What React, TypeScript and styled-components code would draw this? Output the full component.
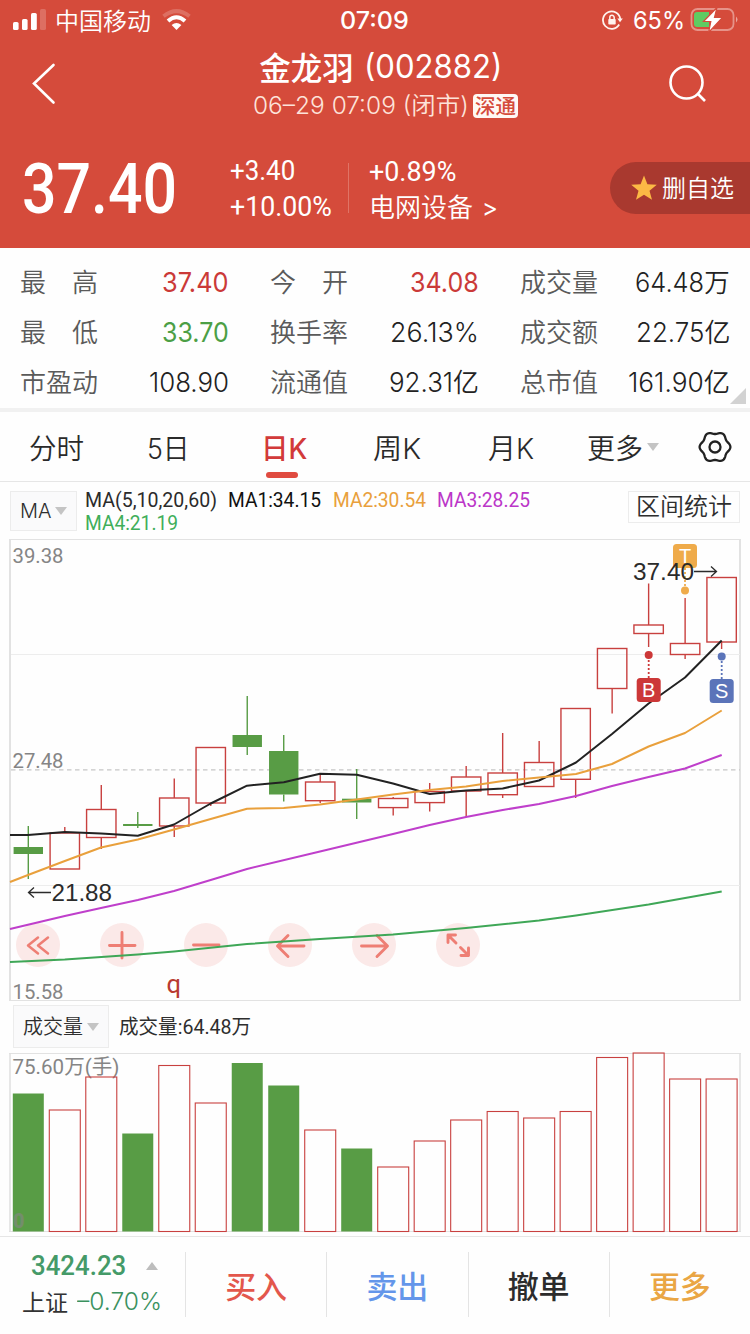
import React, { useLayoutEffect, useRef, useState } from "react";
import styled, { createGlobalStyle, css } from "styled-components";

const RED = "#d54b3b";
const CJK = `"Noto Sans CJK SC", sans-serif`;
const UI = `Inter, ${CJK}`;
const DIN = `Roboto, ${CJK}`;
const UP = "#c8403f";
const DOWN = "#589c45";

const Global = createGlobalStyle`
  * { box-sizing: border-box; }
  body { margin: 0; background: #fefefe; font-family: ${UI}; color: #2e2e2e; }
  button { font: inherit; color: inherit; border: 0; background: none; padding: 0; }
`;

/* Text condensed or widened to a fixed measure. */
const FitBox = styled.span<{ $w: number; $din?: boolean }>`
  display: inline-block;
  flex: none;
  width: ${(p) => p.$w}px;
  text-align: left;
  font-family: ${(p) => (p.$din ? DIN : "inherit")};
`;
const FitInner = styled.span`
  display: inline-block;
  white-space: pre;
  transform-origin: 0 50%;
`;
function Fit({ w, din, children }: { w: number; din?: boolean; children: string }) {
  const ref = useRef<HTMLSpanElement>(null);
  const [scale, setScale] = useState(1);
  useLayoutEffect(() => {
    if (ref.current) setScale(w / ref.current.offsetWidth);
  }, [w, children]);
  return (
    <FitBox $w={w} $din={din}>
      <FitInner ref={ref} style={{ transform: `scaleX(${scale})` }}>
        {children}
      </FitInner>
    </FitBox>
  );
}

const Page = styled.div`
  width: 750px;
  height: 1334px;
  overflow: hidden;
  background: #fefefe;
  display: flex;
  flex-direction: column;
`;

/* ---------- header ---------- */
const Header = styled.header`
  height: 248px;
  background: ${RED};
  color: #fff;
  flex: none;
`;
const StatusBar = styled.div`
  height: 40px;
  display: grid;
  grid-template-columns: 1fr auto 1fr;
  align-items: center;
  padding: 0 12px 0 13px;
  font-size: 24px;
  font-weight: 400;
`;
const StatusSide = styled.div<{ $end?: boolean }>`
  display: flex;
  align-items: center;
  justify-content: ${(p) => (p.$end ? "flex-end" : "flex-start")};
`;
const Carrier = styled.span`
  font: 350 24px/32px ${CJK};
  margin: 0 11px 0 9px;
`;
const Clock = styled.span`
  font-weight: 500;
  font-size: 24px;
  padding-right: 2px;
`;
const Battery = styled.span`
  margin: 0 5px 0 10px;
`;
const TitleRow = styled.div`
  height: 88px;
  display: grid;
  grid-template-columns: 85px 1fr 124px;
`;
const NavButton = styled.button`
  display: flex;
  align-items: center;
  justify-content: center;
`;
const TitleBlock = styled.div`
  display: flex;
  flex-direction: column;
  align-items: center;
  padding-left: 50px;
`;
const Title = styled.h1`
  margin: 5px 0 0;
  display: flex;
  align-items: center;
  gap: 10px;
  font-size: 32px;
  line-height: 44px;
  font-weight: 400;
`;
const TitleName = styled.span`
  font: 500 31.500px/44px ${CJK};
  margin-top: -3px;
`;
const Session = styled.div`
  display: flex;
  align-items: center;
  gap: 4px;
  font-size: 24px;
  font-weight: 350;
  line-height: 34px;
  color: #fde3da;
  padding-left: 10px;
`;
const Badge = styled.span`
  width: 45px;
  height: 24px;
  border-radius: 4px;
  background: #fff8f4;
  color: ${RED};
  font: 500 20.500px/22px ${CJK};
  text-align: center;
`;
const QuoteRow = styled.div`
  height: 120px;
  display: flex;
  align-items: center;
  padding-left: 22px;
`;
const Price = styled.div`
  font-size: 71px;
  line-height: 80px;
  font-weight: 500;
  margin-right: 53px;
`;
const Change = styled.div<{ $w: number; $top: number }>`
  width: ${(p) => p.$w}px;
  font-size: 27.500px;
  line-height: 36px;
  display: flex;
  flex-direction: column;
  padding-top: ${(p) => p.$top}px;
`;
const Rule = styled.div`
  width: 1px;
  height: 50px;
  background: #e07466;
  margin-right: 20px;
`;
const Sector = styled.span`
  display: flex;
  gap: 9px;
  margin-top: -2px;
  font: 350 26px/36px ${CJK};
`;
const Arrow = styled.span`
  font: 400 24px/40px Inter, sans-serif;
`;
const Watch = styled.button`
  margin-left: auto;
  width: 140px;
  height: 52px;
  border-radius: 26px 0 0 26px;
  background: #a9392f;
  display: flex;
  align-items: center;
  gap: 4px;
  padding-left: 20px;
  font: 350 24px/48px ${CJK};
`;
const WatchLabel = styled.span`
  margin-top: -3px;
`;

/* ---------- statistics ---------- */
const Stats = styled.section`
  height: 164px;
  border-bottom: 4px solid #f1f1f1;
  padding: 9px 20px 0 20px;
  display: grid;
  grid-template-columns: 209px 209px 210px;
  column-gap: 41px;
  grid-auto-rows: 50px;
  position: relative;
  flex: none;
`;
const Stat = styled.div`
  display: flex;
  align-items: center;
  justify-content: space-between;
`;
const StatLabel = styled.span`
  font: 350 26px/38px ${CJK};
  color: #5a5a5a;
  margin-top: -2px;
`;
const StatValue = styled.span<{ $color?: string }>`
  font-size: 26.500px;
  font-weight: ${(p) => (p.$color ? 400 : 350)};
  line-height: 38px;
  color: ${(p) => p.$color ?? "#222"};
`;
const Corner = styled.i`
  position: absolute;
  right: 4px;
  bottom: 4px;
  border: 8px solid;
  border-color: transparent #d2d2d2 #d2d2d2 transparent;
`;

/* ---------- period tabs ---------- */
const Tabs = styled.nav`
  height: 70px;
  border-bottom: 1px solid #e6e6e6;
  display: flex;
  padding-left: 29px;
  position: relative;
  flex: none;
`;
const Tab = styled.button<{ $gap: number; $active?: boolean }>`
  height: 69px;
  margin-right: ${(p) => p.$gap}px;
  font-size: 28px;
  font-weight: ${(p) => (p.$active ? 500 : 350)};
  color: ${(p) => (p.$active ? "#d23a3a" : "#2a2a2a")};
  display: flex;
  align-items: center;
  gap: 4px;
  position: relative;
  &::after {
    content: "";
    display: ${(p) => (p.$active ? "block" : "none")};
    position: absolute;
    left: 5px;
    bottom: 3px;
    width: 32px;
    height: 6px;
    border-radius: 3px;
    background: #e04b40;
  }
`;
const Caret = styled.i<{ $up?: boolean }>`
  border: 6.5px solid transparent;
  ${(p) =>
    p.$up
      ? css`border-bottom: 8px solid #bdbdbd; border-top: 0;`
      : css`border-top: 8px solid #c4c4c4; border-bottom: 0;`}
`;

/* ---------- indicator bars ---------- */
const MaBar = styled.div`
  height: 58px;
  display: flex;
  padding: 9px 10px 0 10px;
  flex: none;
`;
const Select = styled.button<{ $w: number; $h: number }>`
  width: ${(p) => p.$w}px;
  height: ${(p) => p.$h}px;
  border: 1px solid #ececec;
  background: #fafafb;
  display: flex;
  align-items: center;
  justify-content: center;
  gap: 4px;
  font-size: 20px;
  font-weight: 350;
`;
const MaLegend = styled.div`
  width: 520px;
  margin-left: 8px;
  margin-top: -2px;
  display: flex;
  flex-wrap: wrap;
  align-content: flex-start;
  font-size: 20px;
  line-height: 23px;
`;
const MaItem = styled.span<{ $color: string; $gap: number }>`
  color: ${(p) => p.$color};
  margin-right: ${(p) => p.$gap}px;
`;
const RangeButton = styled.button`
  width: 112px;
  height: 32px;
  margin-left: auto;
  border: 1px solid #ececec;
  padding-bottom: 4px;
  font: 350 24px/26px ${CJK};
`;
const VolumeBar = styled.div`
  height: 51px;
  display: flex;
  align-items: center;
  padding-left: 13px;
  gap: 10px;
  font: 400 20px/30px ${DIN};
  flex: none;
`;

/* ---------- charts ---------- */
const ChartArea = styled.div`
  position: relative;
  height: 461px;
  flex: none;
`;
const Plot = styled.svg`
  display: block;
  position: relative;
  overflow: visible;
  pointer-events: none;
  flex: none;
`;
const Controls = styled.div`
  position: absolute;
  left: 16px;
  top: 383px;
  display: flex;
  gap: 40px;
`;
const Control = styled.button`
  width: 44px;
  height: 44px;
  border-radius: 50%;
  background: #fbe9e8;
`;

type Candle = [number, number, number, number, boolean?];
/* high, body top, body bottom, low, falling */
const candles: Candle[] = [
  [826, 847, 854, 879, true],
  [827, 833, 869, 869],
  [785, 809.5, 837.5, 849],
  [812, 824, 826, 828, true],
  [778.5, 798, 826, 837],
  [747.5, 747.5, 803, 806],
  [696, 735, 747, 755, true],
  [735, 751, 794.5, 801.5, true],
  [775, 782, 800.7, 803],
  [769, 798.7, 802.5, 819, true],
  [797, 798.5, 807.6, 815.5],
  [783, 791.5, 802.6, 811.5],
  [766, 777, 791, 817],
  [733, 773, 794.7, 798],
  [741, 762.5, 786.5, 787],
  [708.5, 708.5, 779.3, 798],
  [648.5, 648.5, 688.5, 713.5],
  [583.5, 625, 633.5, 647],
  [598, 643.5, 654.5, 659],
  [577.5, 577.5, 642, 649],
];
const volumes = [
  1093.5, 1110, 1077, 1133.5, 1065.5, 1103, 1063, 1085.5, 1130, 1148.5, 1167, 1141, 1120, 1111.5, 1118, 1111.5,
  1057.5, 1053, 1079, 1079,
];
const STEP = 36.49;
const cx = (i: number) => 28.3 + i * STEP;

const ma = [
  {
    color: "#222",
    pts: "10,835 28,835 64.8,832 101,833.5 137.8,835.8 174,824.5 210.7,803.5 247,785.7 283.8,782.3 320,773.7 356.8,774.7 393,783.5 429.7,794 466,790.5 502.7,788.5 539,780.5 576,762.5 612,734 648.6,703.5 685,677.5 721.7,640.5",
  },
  {
    color: "#e9a03c",
    pts: "10,882 28,875 64.8,861 101,847.5 137.8,839.5 174,829.5 210.7,819 247,808.7 283.8,808 320,804.5 356.8,799.5 393,794.5 429.7,790 466,786.5 502.7,781 539,777.5 576,774 612,764 648.6,746.5 685,733 721.7,710.5",
  },
  {
    color: "#bf3fcb",
    pts: "10,929 64.8,916 101,908 137.8,900 174,891 210.7,880 247,869 320,851.5 393,834 429.7,825 466,817 502.7,810 539,804 576,796 612,786 648.6,777 685,768.5 721.7,755",
  },
  {
    color: "#3fa757",
    pts: "10,962 64.8,959.5 137.8,954.5 174,951.5 247,944 320,939 393,934.5 466,928 539,920.5 576,915.5 648.6,904.5 721.7,891.5",
  },
];

const marks = [
  { x: 648.7, y: 690, dot: 655, letter: "B", color: "#cc3838" },
  { x: 685, y: 556, dot: 590.5, letter: "T", color: "#efab4a" },
  { x: 721.7, y: 691, dot: 656.5, letter: "S", color: "#5b74b9" },
];

function Icon({ d, w }: { d: string; w: number }) {
  return (
    <svg width="44" height="44" viewBox="0 0 44 44" fill="none" stroke="#ee7e74" strokeWidth={w} strokeLinecap="round" strokeLinejoin="round">
      <path d={d} />
    </svg>
  );
}
const controls = [
  "M22 14.500 L12 22.500 L22 30.500 M32 14.500 L22 22.500 L32 30.500",
  "M22 9.500 V35 M9.500 22.500 H35",
  "M9.500 22 H35",
  "M10 23 H36 M20 12.500 L9.500 23 L20 33.500",
  "M9.500 23 H35 M25 12.500 L35.500 23 L25 33.500",
  "M12 19.500 V12 H19.500 M12 12 L20 20 M24.500 24.500 L32.500 32.500 M25 32.500 H32.500 V25",
];

function gearPath() {
  const pts: string[] = [];
  for (let a = 0; a < 360; a += 4) {
    const t = (a * Math.PI) / 180;
    const r = 14.2 + 1.2 * Math.cos(6 * t);
    pts.push(`${(18 + r * Math.cos(t)).toFixed(2)} ${(18 + r * Math.sin(t)).toFixed(2)}`);
  }
  return `M${pts.join("L")}Z`;
}
const Gear = styled.svg`
  position: absolute;
  right: 17px;
  top: 17px;
`;

/* ---------- bottom bar ---------- */
const Footer = styled.footer`
  height: 98px;
  margin-top: 4px;
  border-top: 1px solid #e6e6e6;
  display: flex;
  padding-top: 15px;
  flex: none;
`;
const IndexCell = styled.div`
  width: 185px;
  height: 66px;
  padding-left: 22px;
  margin-top: -3px;
`;
const IndexTop = styled.div`
  display: flex;
  align-items: center;
  gap: 20px;
  padding-left: 9px;
  font-size: 28px;
  line-height: 34px;
  color: #459a68;
  font-weight: 500;
`;
const IndexBottom = styled.div`
  display: flex;
  gap: 9px;
  font-size: 24px;
  font-weight: 350;
  line-height: 34px;
  margin-top: 2px;
  color: #3a915e;
`;
const IndexName = styled.span`
  font: 400 23px/32px ${CJK};
  color: #333;
`;
const Action = styled.button<{ $color: string }>`
  flex: 1;
  height: 65px;
  border-left: 1.5px solid #e4e4e4;
  color: ${(p) => p.$color};
  font: 500 31px/62px ${CJK};
`;

const stats: [string, string, number, string?][] = [
  ["最　高", "37.40", 67, "#cb3a38"],
  ["今　开", "34.08", 69, "#cb3a38"],
  ["成交量", "64.48万", 95],
  ["最　低", "33.70", 67, "#4c9f45"],
  ["换手率", "26.13%", 89],
  ["成交额", "22.75亿", 94],
  ["市盈动", "108.90", 80],
  ["流通值", "92.31亿", 90],
  ["总市值", "161.90亿", 102],
];

export default function App() {
  return (
    <Page>
      <Global />
      <Header>
        <StatusBar>
          <StatusSide>
            <svg width="33" height="24" viewBox="0 0 33 24" fill="#fff">
              <rect x="0" y="14" width="5.6" height="8" rx="1.6" />
              <rect x="9" y="11" width="5.6" height="11" rx="1.6" />
              <rect x="18" y="5" width="5.8" height="17" rx="1.6" />
              <rect x="27" y="1" width="6" height="21" rx="1.6" opacity=".2" />
            </svg>
            <Carrier>中国移动</Carrier>
            <svg width="29" height="24" viewBox="0 0 29 24" fill="none" stroke="#fff" strokeWidth="4">
              <path d="M1.5 8.2 Q14.500 -2 27.500 8.200" opacity=".2" />
              <path d="M6 13 Q14.500 5.500 23 13" />
              <path d="M14.500 22 L9.600 17 Q14.500 13 19.400 17 Z" fill="#fff" stroke="none" />
            </svg>
          </StatusSide>
          <Clock><Fit w={69}>07:09</Fit></Clock>
          <StatusSide $end>
            <svg width="21" height="20" viewBox="0 0 21 20" fill="none" stroke="#fff3ee" strokeWidth="1.8">
              <path d="M17.200 14.500 A8.700 8.700 0 1 1 18.300 9" />
              <path d="M15.300 8.500 H20.800 L18 12.300 Z" fill="#fff3ee" stroke="none" />
              <rect x="6.300" y="9" width="7.400" height="5.600" rx=".8" fill="#fff3ee" stroke="none" />
              <path d="M7.800 9.500 V7.500 a2.200 2.200 0 0 1 4.400 0 V9.500" strokeWidth="1.500" />
            </svg>
            <Battery><Fit w={52}>65%</Fit></Battery>
            <svg width="48" height="26" viewBox="0 0 48 26">
              <rect x="1.500" y="2" width="42" height="21" rx="6" fill="none" stroke="#fff" strokeOpacity=".4" strokeWidth="1.800" />
              <path d="M46 9.500 q3 3 0 6 z" fill="#fff" fillOpacity=".5" />
              <path d="M7 5 H19 V20 H7 a3 3 0 0 1 -3 -3 V8 a3 3 0 0 1 3 -3z" fill="#5fcb62" />
              <path d="M27 .5 L13.500 14.500 H20.800 L18.600 25.500 L32.500 10.300 H24.500 Z" fill="#fff" stroke={RED} strokeWidth="1.200" />
            </svg>
          </StatusSide>
        </StatusBar>
        <TitleRow>
          <NavButton>
            <svg width="30" height="44" viewBox="0 0 30 44" fill="none" stroke="#fff" strokeWidth="2.600" strokeLinecap="round">
              <path d="M25.500 3 L6 21.500 L25.500 40.500" />
            </svg>
          </NavButton>
          <TitleBlock>
            <Title>
              <TitleName>金龙羽</TitleName>
              <Fit w={138}>(002882)</Fit>
            </Title>
            <Session>
              <Fit w={216}>06–29 07:09 (闭市)</Fit>
              <Badge>深通</Badge>
            </Session>
          </TitleBlock>
          <NavButton>
            <svg width="40" height="40" viewBox="0 0 40 40" fill="none" stroke="#fff" strokeWidth="2.600">
              <circle cx="18.500" cy="18.500" r="16" />
              <path d="M29.500 29.500 L37 37" />
            </svg>
          </NavButton>
        </TitleRow>
        <QuoteRow>
          <Price><Fit din w={155}>37.40</Fit></Price>
          <Change $w={118} $top={2}>
            <Fit din w={65}>+3.40</Fit>
            <Fit din w={102}>+10.00%</Fit>
          </Change>
          <Rule />
          <Change $w={135} $top={5}>
            <Fit din w={87}>+0.89%</Fit>
            <Sector>电网设备<Arrow>&gt;</Arrow></Sector>
          </Change>
          <Watch>
            <svg width="28" height="28" viewBox="0 0 28 28">
              <path d="M14 1.500 L17.400 10.300 L26.800 10.800 L19.500 16.700 L22 25.800 L14 20.700 L6 25.800 L8.500 16.700 L1.200 10.800 L10.600 10.300 Z" fill="#fcb945" />
            </svg>
            <WatchLabel>删自选</WatchLabel>
          </Watch>
        </QuoteRow>
      </Header>

      <Stats>
        {stats.map(([label, value, w, color]) => (
          <Stat key={label}>
            <StatLabel>{label}</StatLabel>
            <StatValue $color={color}><Fit w={w}>{value}</Fit></StatValue>
          </Stat>
        ))}
        <Corner />
      </Stats>

      <Tabs>
        <Tab $gap={63}><Fit w={55}>分时</Fit></Tab>
        <Tab $gap={71}><Fit w={43}>5日</Fit></Tab>
        <Tab $gap={66} $active><Fit w={46}>日K</Fit></Tab>
        <Tab $gap={67}><Fit w={48}>周K</Fit></Tab>
        <Tab $gap={53}><Fit w={46}>月K</Fit></Tab>
        <Tab $gap={0}><Fit w={56}>更多</Fit><Caret /></Tab>
        <Gear width="36" height="36" viewBox="0 0 36 36" fill="none" stroke="#222" strokeWidth="2.300">
          <path d={gearPath()} />
          <circle cx="18" cy="18" r="5.500" />
        </Gear>
      </Tabs>

      <MaBar>
        <Select $w={67} $h={40}><Fit w={31}>MA</Fit><Caret /></Select>
        <MaLegend>
          <MaItem $color="#2b2b2b" $gap={11}><Fit din w={132}>MA(5,10,20,60)</Fit></MaItem>
          <MaItem $color="#111" $gap={12}><Fit din w={93}>MA1:34.15</Fit></MaItem>
          <MaItem $color="#e9a03c" $gap={11}><Fit din w={93}>MA2:30.54</Fit></MaItem>
          <MaItem $color="#bb36c8" $gap={60}><Fit din w={93}>MA3:28.25</Fit></MaItem>
          <MaItem $color="#3fae5a" $gap={0}><Fit din w={93}>MA4:21.19</Fit></MaItem>
        </MaLegend>
        <RangeButton>区间统计</RangeButton>
      </MaBar>

      <ChartArea>
        <Controls>
          {controls.map((d, i) => (
            <Control key={i}><Icon d={d} w={i === 0 ? 2.5 : 2.9} /></Control>
          ))}
        </Controls>
        <Plot width="750" height="461" viewBox="0 540 750 461">
          <path d="M9 539.500 H741 M9 1000.500 H741" stroke="#e2e2e2" />
          <path d="M10 540 V1000 M740 540 V1000" stroke="#dfdfdf" strokeWidth="1.800" />
          <path d="M11 654.500 H740 M11 885.500 H740" stroke="#ededed" />
          <path d="M11 769.800 H740" stroke="#c6c6c6" strokeWidth="1.300" strokeDasharray="4.500 3.500" />
          <g fontFamily={DIN} fontSize="21" fill="#858585">
            <text x="12.500" y="563" textLength="51" lengthAdjust="spacingAndGlyphs">39.38</text>
            <text x="12.500" y="768" textLength="51" lengthAdjust="spacingAndGlyphs">27.48</text>
            <text x="12.500" y="998.500" textLength="51" lengthAdjust="spacingAndGlyphs">15.58</text>
          </g>
          {candles.map(([hi, top, bot, lo, down], i) => (
            <g key={i} stroke={down ? DOWN : UP} strokeWidth="1.400" fill={down ? DOWN : "none"}>
              <path d={`M${cx(i)} ${hi} V${top} M${cx(i)} ${bot} V${lo}`} />
              <rect x={cx(i) - 14.7} y={top} width={29.4} height={bot - top} stroke={down ? "none" : UP} />
            </g>
          ))}
          {ma.map((l) => (
            <polyline key={l.color} points={l.pts} fill="none" stroke={l.color} strokeWidth="2" strokeLinejoin="round" />
          ))}
          {marks.map((m) => (
            <g key={m.letter}>
              <path d={`M${m.x} ${m.y} V${m.dot}`} stroke={m.color} strokeWidth="1.800" strokeDasharray="2 2" />
              <circle cx={m.x} cy={m.dot} r="4" fill={m.color} />
              <rect x={m.x - 12} y={m.y - 12} width="24" height="24" rx="3.500" fill={m.color} />
              <text x={m.x} y={m.y + 7} fontFamily="Liberation Sans, sans-serif" fontSize="20" fill="#fff" textAnchor="middle">{m.letter}</text>
            </g>
          ))}
          <g fontFamily="Liberation Sans, sans-serif" fontSize="23.500" fill="#2b2b2b">
            <text x="633" y="580" textLength="61" lengthAdjust="spacingAndGlyphs">37.40</text>
            <text x="51.500" y="901" textLength="60.500" lengthAdjust="spacingAndGlyphs">21.88</text>
          </g>
          <path d="M694 571.500 H716 M711 566.500 L716.500 571.500 L711 576.500 M51 892.500 H29 M34 887.500 L28.500 892.500 L34 897.500" fill="none" stroke="#2b2b2b" strokeWidth="1.300" />
          <text x="166.500" y="993" fontFamily={DIN} fontSize="25" fill="#b93a30" textLength="14.500" lengthAdjust="spacingAndGlyphs">q</text>
        </Plot>
      </ChartArea>

      <VolumeBar>
        <Select $w={96} $h={43}><Fit w={60}>成交量</Fit><Caret /></Select>
        <Fit din w={132}>成交量:64.48万</Fit>
      </VolumeBar>

      <Plot width="750" height="180" viewBox="0 1052 750 180">
        <path d="M9 1053.500 H741 M9 1231.500 H741" stroke="#e2e2e2" />
        <path d="M10 1053 V1232 M740 1053 V1232" stroke="#dfdfdf" strokeWidth="1.500" />
        <text x="12.500" y="1074" fontFamily={DIN} fontSize="20.500" fill="#858585" textLength="107" lengthAdjust="spacingAndGlyphs">75.60万(手)</text>
        {volumes.map((top, i) => {
          const down = candles[i][4];
          return (
            <rect
              key={i}
              x={cx(i) - 15.5}
              y={top}
              width={31}
              height={1231.5 - top}
              fill={down ? DOWN : "none"}
              stroke={down ? "none" : UP}
              strokeWidth="1.100"
            />
          );
        })}
        <text x="13" y="1228" fontFamily={DIN} fontSize="20" fontWeight="900" fill="#858585" opacity=".6">0</text>
      </Plot>

      <Footer>
        <IndexCell>
          <IndexTop><Fit din w={95}>3424.23</Fit><Caret $up /></IndexTop>
          <IndexBottom><IndexName>上证</IndexName><Fit w={85}>–0.70%</Fit></IndexBottom>
        </IndexCell>
        <Action $color="#e3574c">买入</Action>
        <Action $color="#6496ea">卖出</Action>
        <Action $color="#2c2c2c">撤单</Action>
        <Action $color="#eaa644">更多</Action>
      </Footer>
    </Page>
  );
}
